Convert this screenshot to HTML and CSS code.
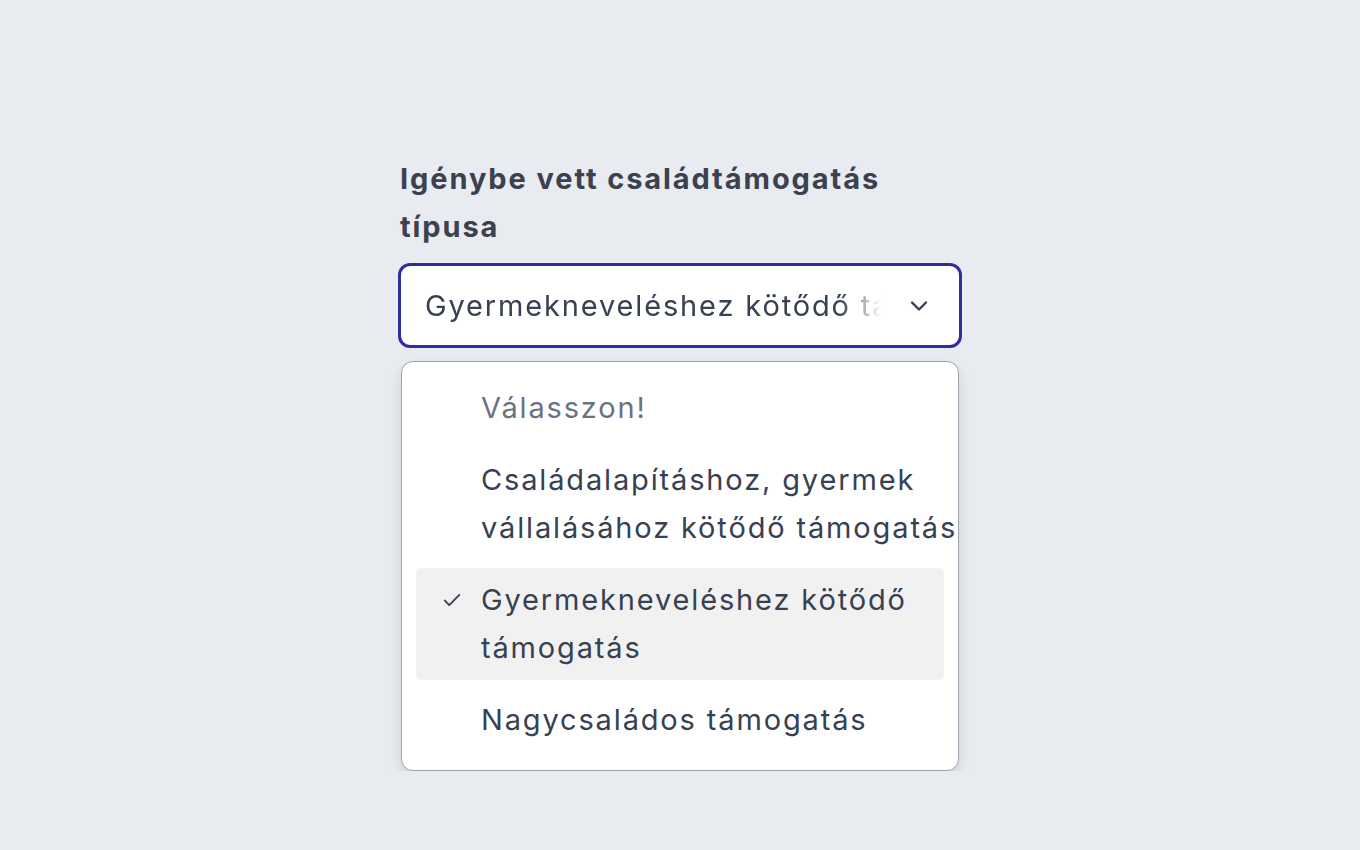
FILE: index.html
```html
<!DOCTYPE html>
<html lang="hu">
  <head>
    <meta charset="UTF-8" />
    <title>Családtámogatás</title>
    <link rel="stylesheet" href="styles.css">
  </head>
  <body>
    <div class="field">
      <label class="field_label">Igénybe vett családtámogatás típusa</label>
      <div class="select">
        <span class="select_value">Gyermekneveléshez kötődő támogatás</span>
        <svg class="select_arrow" width="24" height="24" viewBox="0 0 24 24" fill="none" stroke="currentColor" stroke-width="2.4" stroke-linecap="round" stroke-linejoin="round">
          <path d="M5 8.5l7 7 7-7" />
        </svg>
      </div>
      <ul class="options">
        <li class="option option_placeholder">Válasszon!</li>
        <li class="option">Családalapításhoz, gyermek<br /><span class="nowrap">vállalásához kötődő támogatás</span></li>
        <li class="option option_active">
          <svg class="option_check" width="22" height="22" viewBox="0 0 24 24" fill="none" stroke="currentColor" stroke-width="2" stroke-linecap="round" stroke-linejoin="round">
            <path d="M4 12.5l5 5L20 6.5" />
          </svg>
          Gyermekneveléshez kötődő támogatás
        </li>
        <li class="option">Nagycsaládos támogatás</li>
      </ul>
    </div>
  </body>
</html>
```

FILE: styles.css
```css
* {
  margin: 0;
  padding: 0;
  box-sizing: border-box;
}
body {
  font-family: "Inter", "Noto Sans", sans-serif;
  background: #e8ebf0;
  color: #374151;
  font-size: 29px;
  line-height: 48px;
  letter-spacing: 1.85px;
}
li {
  list-style-type: none;
}
.field {
  width: 564px;
  margin: 155px 0 0 398px;
}
.field_label {
  display: block;
  font-weight: 650;
  letter-spacing: 1.9px;
  padding: 0 76px 0 2px;
  color: #3b414e;
}
.select {
  display: flex;
  align-items: center;
  height: 85px;
  margin-top: 12px;
  background: #fff;
  border: 3px solid #2f2da6;
  border-radius: 12px;
  padding: 0 28px 0 24px;
}
.select_value {
  flex: 1;
  white-space: nowrap;
  overflow: hidden;
  -webkit-mask-image: linear-gradient(to right, #000 91%, transparent 100%);
  mask-image: linear-gradient(to right, #000 91%, transparent 100%);
  margin-right: 26px;
}
.select_arrow {
  color: #374151;
  flex: none;
}
.options {
  margin: 13px 3px 0;
  background: #fff;
  border: 1.5px solid #9ca3af;
  border-radius: 12px;
  padding: 14px 14px 18px;
  box-shadow: 0 6px 12px rgba(30, 41, 59, 0.14);
  display: flex;
  flex-direction: column;
  gap: 8px;
}
.option {
  position: relative;
  padding: 8px 0 8px 65px;
  border-radius: 6px;
}
.option_placeholder {
  color: #6b7280;
}
.option_active {
  background: #f1f1f2;
}
.option_check {
  position: absolute;
  left: 25px;
  top: 21px;
  color: #374151;
}
.nowrap {
  white-space: nowrap;
}
```
